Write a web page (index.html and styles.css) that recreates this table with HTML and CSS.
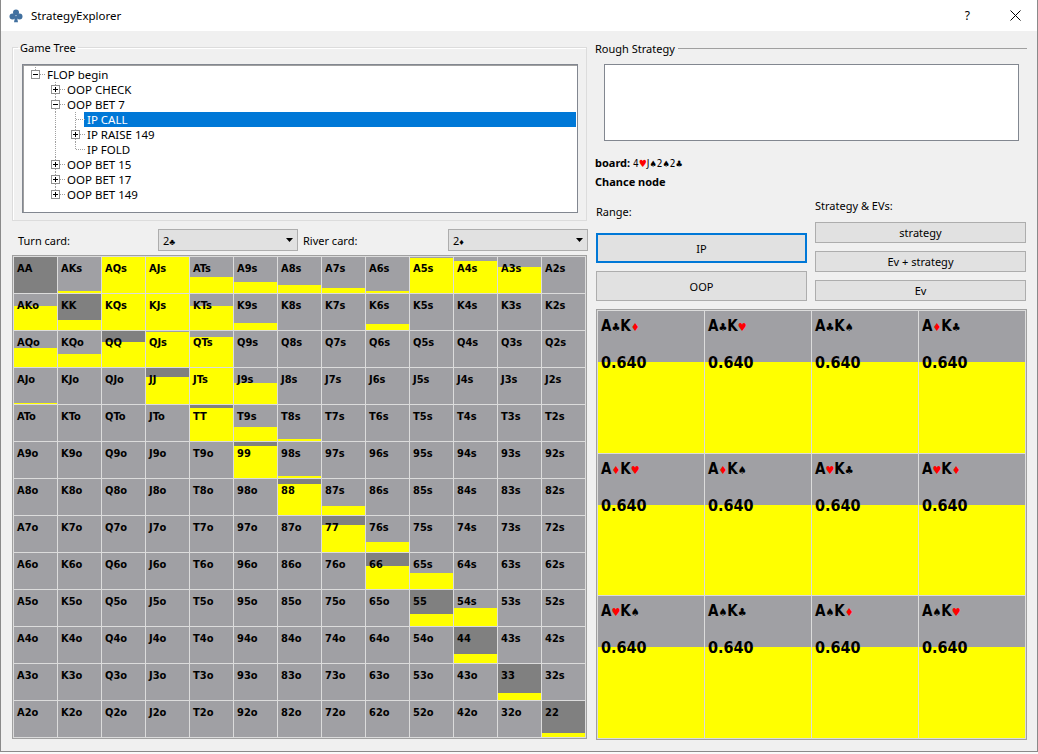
FILE: index.html
```html
<!DOCTYPE html>
<html>
<head>
<meta charset="utf-8">
<title>StrategyExplorer</title>
<link rel="stylesheet" href="styles.css">
</head>
<body>
<div class="window">
  <div class="titlebar">
    <svg class="app-icon" width="14" height="14" viewBox="0 0 14 14"><circle cx="7" cy="3.6" r="3"/><circle cx="3.5" cy="7.6" r="3"/><circle cx="10.5" cy="7.6" r="3"/><path d="M6.2 7h1.6l1.2 6.2H5z"/></svg>
    <span class="title">StrategyExplorer</span>
    <span class="help">?</span>
    <svg class="close" width="11" height="11" viewBox="0 0 11 11"><path d="M0.5 0.5l10 10M10.5 0.5l-10 10" stroke="#000" stroke-width="1"/></svg>
  </div>

  <div class="content">
    <div class="left">
      <fieldset class="group">
        <legend>Game Tree</legend>
        <div class="tree">
          <div class="row"><span class="br l"><svg class="exp" width="9" height="9"><rect x="0.5" y="0.5" width="8" height="8" fill="#fff" stroke="#919191"/><path d="M2 4.5h5" stroke="#000"/></svg></span><span class="lbl">FLOP begin</span></div>
          <div class="row"><span class="br"></span><span class="br t"><svg class="exp" width="9" height="9"><rect x="0.5" y="0.5" width="8" height="8" fill="#fff" stroke="#919191"/><path d="M2 4.5h5M4.5 2v5" stroke="#000"/></svg></span><span class="lbl">OOP CHECK</span></div>
          <div class="row"><span class="br"></span><span class="br t"><svg class="exp" width="9" height="9"><rect x="0.5" y="0.5" width="8" height="8" fill="#fff" stroke="#919191"/><path d="M2 4.5h5" stroke="#000"/></svg></span><span class="lbl">OOP BET 7</span></div>
          <div class="row sel"><span class="br"></span><span class="br v"></span><span class="br t"></span><span class="lbl">IP CALL</span></div>
          <div class="row"><span class="br"></span><span class="br v"></span><span class="br t"><svg class="exp" width="9" height="9"><rect x="0.5" y="0.5" width="8" height="8" fill="#fff" stroke="#919191"/><path d="M2 4.5h5M4.5 2v5" stroke="#000"/></svg></span><span class="lbl">IP RAISE 149</span></div>
          <div class="row"><span class="br"></span><span class="br v"></span><span class="br l"></span><span class="lbl">IP FOLD</span></div>
          <div class="row"><span class="br"></span><span class="br t"><svg class="exp" width="9" height="9"><rect x="0.5" y="0.5" width="8" height="8" fill="#fff" stroke="#919191"/><path d="M2 4.5h5M4.5 2v5" stroke="#000"/></svg></span><span class="lbl">OOP BET 15</span></div>
          <div class="row"><span class="br"></span><span class="br t"><svg class="exp" width="9" height="9"><rect x="0.5" y="0.5" width="8" height="8" fill="#fff" stroke="#919191"/><path d="M2 4.5h5M4.5 2v5" stroke="#000"/></svg></span><span class="lbl">OOP BET 17</span></div>
          <div class="row"><span class="br"></span><span class="br l"><svg class="exp" width="9" height="9"><rect x="0.5" y="0.5" width="8" height="8" fill="#fff" stroke="#919191"/><path d="M2 4.5h5M4.5 2v5" stroke="#000"/></svg></span><span class="lbl">OOP BET 149</span></div>
        </div>
      </fieldset>

      <div class="cards-row">
        <span class="lab first">Turn card:</span>
        <div class="combo"><span>2<span class="suit">♣</span></span><svg class="arrow" width="7" height="4" viewBox="0 0 7 4"><path d="M0 0h7L3.5 4z"/></svg></div>
        <span class="lab">River card:</span>
        <div class="combo"><span>2<span class="suit">♦</span></span><svg class="arrow" width="7" height="4" viewBox="0 0 7 4"><path d="M0 0h7L3.5 4z"/></svg></div>
      </div>

      <div class="range">
        <div class="c p">AA</div><div class="c" style="--y:5%">AKs</div><div class="c" style="--y:100%">AQs</div><div class="c" style="--y:100%">AJs</div><div class="c" style="--y:44%">ATs</div><div class="c" style="--y:30%">A9s</div><div class="c" style="--y:22%">A8s</div><div class="c" style="--y:13%">A7s</div><div class="c" style="--y:6%">A6s</div><div class="c" style="--y:96%">A5s</div><div class="c" style="--y:88%">A4s</div><div class="c" style="--y:73%">A3s</div><div class="c">A2s</div>
        <div class="c" style="--y:66%">AKo</div><div class="c p" style="--y:28%">KK</div><div class="c" style="--y:100%">KQs</div><div class="c" style="--y:100%">KJs</div><div class="c" style="--y:66%">KTs</div><div class="c" style="--y:19%">K9s</div><div class="c">K8s</div><div class="c">K7s</div><div class="c" style="--y:16%">K6s</div><div class="c">K5s</div><div class="c">K4s</div><div class="c">K3s</div><div class="c">K2s</div>
        <div class="c" style="--y:54%">AQo</div><div class="c" style="--y:35%">KQo</div><div class="c p" style="--y:69%">QQ</div><div class="c" style="--y:97%">QJs</div><div class="c" style="--y:83%">QTs</div><div class="c">Q9s</div><div class="c">Q8s</div><div class="c">Q7s</div><div class="c">Q6s</div><div class="c">Q5s</div><div class="c">Q4s</div><div class="c">Q3s</div><div class="c">Q2s</div>
        <div class="c" style="--y:3%">AJo</div><div class="c">KJo</div><div class="c">QJo</div><div class="c p" style="--y:76%">JJ</div><div class="c" style="--y:100%">JTs</div><div class="c" style="--y:59%">J9s</div><div class="c">J8s</div><div class="c">J7s</div><div class="c">J6s</div><div class="c">J5s</div><div class="c">J4s</div><div class="c">J3s</div><div class="c">J2s</div>
        <div class="c">ATo</div><div class="c">KTo</div><div class="c">QTo</div><div class="c">JTo</div><div class="c p" style="--y:91%">TT</div><div class="c" style="--y:40%">T9s</div><div class="c" style="--y:5%">T8s</div><div class="c">T7s</div><div class="c">T6s</div><div class="c">T5s</div><div class="c">T4s</div><div class="c">T3s</div><div class="c">T2s</div>
        <div class="c">A9o</div><div class="c">K9o</div><div class="c">Q9o</div><div class="c">J9o</div><div class="c">T9o</div><div class="c p" style="--y:89%">99</div><div class="c" style="--y:5%">98s</div><div class="c">97s</div><div class="c">96s</div><div class="c">95s</div><div class="c">94s</div><div class="c">93s</div><div class="c">92s</div>
        <div class="c">A8o</div><div class="c">K8o</div><div class="c">Q8o</div><div class="c">J8o</div><div class="c">T8o</div><div class="c">98o</div><div class="c p" style="--y:86%">88</div><div class="c" style="--y:25%">87s</div><div class="c">86s</div><div class="c">85s</div><div class="c">84s</div><div class="c">83s</div><div class="c">82s</div>
        <div class="c">A7o</div><div class="c">K7o</div><div class="c">Q7o</div><div class="c">J7o</div><div class="c">T7o</div><div class="c">97o</div><div class="c">87o</div><div class="c p" style="--y:74%">77</div><div class="c" style="--y:27%">76s</div><div class="c">75s</div><div class="c">74s</div><div class="c">73s</div><div class="c">72s</div>
        <div class="c">A6o</div><div class="c">K6o</div><div class="c">Q6o</div><div class="c">J6o</div><div class="c">T6o</div><div class="c">96o</div><div class="c">86o</div><div class="c">76o</div><div class="c p" style="--y:64%">66</div><div class="c" style="--y:45%">65s</div><div class="c">64s</div><div class="c">63s</div><div class="c">62s</div>
        <div class="c">A5o</div><div class="c">K5o</div><div class="c">Q5o</div><div class="c">J5o</div><div class="c">T5o</div><div class="c">95o</div><div class="c">85o</div><div class="c">75o</div><div class="c">65o</div><div class="c p" style="--y:34%">55</div><div class="c" style="--y:50%">54s</div><div class="c">53s</div><div class="c">52s</div>
        <div class="c">A4o</div><div class="c">K4o</div><div class="c">Q4o</div><div class="c">J4o</div><div class="c">T4o</div><div class="c">94o</div><div class="c">84o</div><div class="c">74o</div><div class="c">64o</div><div class="c">54o</div><div class="c p" style="--y:25%">44</div><div class="c">43s</div><div class="c">42s</div>
        <div class="c">A3o</div><div class="c">K3o</div><div class="c">Q3o</div><div class="c">J3o</div><div class="c">T3o</div><div class="c">93o</div><div class="c">83o</div><div class="c">73o</div><div class="c">63o</div><div class="c">53o</div><div class="c">43o</div><div class="c p" style="--y:20%">33</div><div class="c">32s</div>
        <div class="c">A2o</div><div class="c">K2o</div><div class="c">Q2o</div><div class="c">J2o</div><div class="c">T2o</div><div class="c">92o</div><div class="c">82o</div><div class="c">72o</div><div class="c">62o</div><div class="c">52o</div><div class="c">42o</div><div class="c">32o</div><div class="c p" style="--y:12%">22</div>
      </div>
    </div>

    <div class="right">
      <div class="flat-title"><span>Rough Strategy</span><span class="rule"></span></div>
      <div class="textarea"></div>
      <div class="board"><b>board:</b> <span class="bc">4<span class="red">♥</span>J<span class="s">♠</span>2<span class="s">♠</span>2<span class="s">♣</span></span></div>
      <div class="chance">Chance node</div>

      <div class="controls">
        <div class="ctl-col">
          <div class="ctl-label range-label">Range:</div>
          <div class="btn big focus">IP</div>
          <div class="btn big">OOP</div>
        </div>
        <div class="ctl-col">
          <div class="ctl-label">Strategy &amp; EVs:</div>
          <div class="btn">strategy</div>
          <div class="btn">Ev + strategy</div>
          <div class="btn">Ev</div>
        </div>
      </div>

      <div class="combos">
        <div class="cc"><div class="hand">A<span class="s">♣</span>K<span class="s red">♦</span></div><div class="val">0.640</div></div>
        <div class="cc"><div class="hand">A<span class="s">♣</span>K<span class="s red">♥</span></div><div class="val">0.640</div></div>
        <div class="cc"><div class="hand">A<span class="s">♣</span>K<span class="s">♠</span></div><div class="val">0.640</div></div>
        <div class="cc"><div class="hand">A<span class="s red">♦</span>K<span class="s">♣</span></div><div class="val">0.640</div></div>
        <div class="cc"><div class="hand">A<span class="s red">♦</span>K<span class="s red">♥</span></div><div class="val">0.640</div></div>
        <div class="cc"><div class="hand">A<span class="s red">♦</span>K<span class="s">♠</span></div><div class="val">0.640</div></div>
        <div class="cc"><div class="hand">A<span class="s red">♥</span>K<span class="s">♣</span></div><div class="val">0.640</div></div>
        <div class="cc"><div class="hand">A<span class="s red">♥</span>K<span class="s red">♦</span></div><div class="val">0.640</div></div>
        <div class="cc"><div class="hand">A<span class="s red">♥</span>K<span class="s">♠</span></div><div class="val">0.640</div></div>
        <div class="cc"><div class="hand">A<span class="s">♠</span>K<span class="s">♣</span></div><div class="val">0.640</div></div>
        <div class="cc"><div class="hand">A<span class="s">♠</span>K<span class="s red">♦</span></div><div class="val">0.640</div></div>
        <div class="cc"><div class="hand">A<span class="s">♠</span>K<span class="s red">♥</span></div><div class="val">0.640</div></div>
      </div>
    </div>
  </div>
</div>
</body>
</html>
```

FILE: styles.css
```css
html, body {
  margin: 0;
  padding: 0;
  background: #fafafa;
}

body {
  font-family: "Noto Sans", "Open Sans", sans-serif;
  font-size: 11px;
  color: #000;
}

.window {
  width: 1038px;
  height: 752px;
  box-sizing: border-box;
  border-left: 1px solid #8a8a8a;
  border-right: 1px solid #8a8a8a;
  border-bottom: 1px solid #8a8a8a;
  background: #f0f0f0;
  overflow: hidden;
}

/* ---------- title bar ---------- */
.titlebar {
  height: 31px;
  background: #ffffff;
  display: flex;
  align-items: center;
}

.app-icon {
  fill: #41709f;
  margin-left: 8px;
}

.title {
  margin-left: 8px;
  font-size: 11.5px;
}

.help {
  margin-left: auto;
  font-size: 12px;
  margin-right: 40px;
}

.close {
  margin-right: 16px;
}

/* ---------- content ---------- */
.content {
  display: flex;
  gap: 8px;
  padding: 9px 10px 0 11px;
}

.left {
  width: 575px;
  flex: none;
}

.right {
  width: 432px;
  flex: none;
}

/* ---------- group box ---------- */
.group {
  margin: 0;
  padding: 9px 8px 7px 9px;
  border: 1px solid #dcdcdc;
  box-shadow: inset 1px 1px 0 #ffffff;
}

.group legend {
  padding: 0 2px;
  margin-left: -4px;
}

.tree {
  height: 149px;
  box-sizing: border-box;
  background: #ffffff;
  border: 1px solid #828790;
  box-shadow: inset 1px 1px 0 #a0a0a0;
  padding: 2px 1px 0 2px;
}

.row {
  display: flex;
  height: 15px;
  line-height: 15px;
  font-size: 11.5px;
  white-space: nowrap;
}

.br {
  width: 20px;
  height: 15px;
  flex: none;
  position: relative;
  display: flex;
  align-items: center;
  justify-content: center;
}

.br .exp {
  position: relative;
  z-index: 1;
  margin-left: 1px;
}

.br.v::before,
.br.t::before,
.br.l::before {
  content: "";
  position: absolute;
  left: 10px;
  top: 0;
  bottom: 0;
  border-left: 1px dotted #a0a0a0;
}

.br.l::before {
  bottom: 8px;
}

.br.t::after,
.br.l::after {
  content: "";
  position: absolute;
  left: 11px;
  right: 0;
  top: 7px;
  border-top: 1px dotted #a0a0a0;
}

.lbl {
  padding: 0 3px 0 2px;
}

.row.sel .lbl {
  flex: 1;
  margin-left: -1px;
  padding-left: 3px;
  background: #0078d7;
  color: #ffffff;
}

/* ---------- turn / river ---------- */
.cards-row {
  display: grid;
  grid-template-columns: 146px 140px 150px 140px;
  align-items: center;
  margin-top: 8px;
  height: 22px;
}

.lab {
  padding-left: 5px;
}

.lab.first {
  padding-left: 6px;
}

.combo {
  height: 22px;
  box-sizing: border-box;
  background: #e1e1e1;
  border: 1px solid #adadad;
  display: flex;
  align-items: center;
  justify-content: space-between;
  padding: 0 4px 0 4px;
}

.suit {
  font-size: 9px;
}

.arrow {
  fill: #000;
}

/* ---------- range grid ---------- */
.range {
  margin-top: 4px;
  width: 575px;
  height: 484px;
  box-sizing: border-box;
  border: 1px solid #a0a0a0;
  background: #dcdcdc;
  padding: 1px;
  display: grid;
  grid-template-columns: repeat(13, 1fr);
  grid-template-rows: repeat(13, 1fr);
  gap: 1px;
}

.c {
  --y: 0%;
  --bg: #a0a0a4;
  background: linear-gradient(to top, #ffff00 var(--y), var(--bg) var(--y));
  font-family: "DejaVu Sans Condensed", "DejaVu Sans", sans-serif;
  font-stretch: condensed;
  font-weight: bold;
  font-size: 11px;
  line-height: 13px;
  padding: 5px 0 0 3px;
  overflow: hidden;
}

.c.p {
  --bg: #808080;
}

/* ---------- right side ---------- */
.flat-title {
  display: flex;
  align-items: center;
  height: 16px;
}

.flat-title .rule {
  flex: 1;
  margin-left: 3px;
  border-top: 1px solid #a0a0a0;
  margin-top: 1px;
}

.textarea {
  margin: 8px 0 0 9px;
  width: 415px;
  height: 77px;
  box-sizing: border-box;
  background: #ffffff;
  border: 1px solid #828790;
}

.board {
  margin-top: 14px;
  height: 16px;
  line-height: 16px;
}

.bc {
  font-family: "DejaVu Sans Condensed", "DejaVu Sans", sans-serif;
  font-size: 10px;
}

.bc .s {
  font-size: 9px;
}

.red {
  color: #ff0000;
}

.chance {
  margin-top: 3px;
  font-weight: bold;
  height: 16px;
  line-height: 16px;
}

.controls {
  margin-left: 1px;
  margin-top: 8px;
  display: grid;
  grid-template-columns: 211px 211px;
  column-gap: 8px;
  align-items: end;
}

.ctl-col {
  display: flex;
  flex-direction: column;
  gap: 8px;
}

.ctl-label {
  height: 16px;
  line-height: 16px;
}

.range-label {
  margin-bottom: 5px;
}

.btn {
  height: 21px;
  box-sizing: border-box;
  background: #e1e1e1;
  border: 1px solid #adadad;
  display: flex;
  align-items: center;
  justify-content: center;
}

.btn.big {
  height: 30px;
}

.btn.focus {
  border: 2px solid #0078d7;
}

/* ---------- combo grid ---------- */
.combos {
  margin: 8px 0 0 1px;
  width: 431px;
  height: 431px;
  box-sizing: border-box;
  border: 1px solid #a0a0a0;
  background: #dcdcdc;
  padding: 1px;
  display: grid;
  grid-template-columns: repeat(4, 1fr);
  grid-template-rows: repeat(3, 1fr);
  gap: 1px;
}

.cc {
  background: linear-gradient(to top, #ffff00 64%, #a0a0a4 64%);
  font-family: "DejaVu Sans Condensed", "DejaVu Sans", sans-serif;
  font-stretch: condensed;
  font-weight: bold;
  padding: 6px 0 0 3px;
}

.hand {
  font-size: 15px;
  line-height: 18px;
}

.hand .s {
  font-size: 11px;
}

.val {
  margin-top: 17px;
  font-size: 16px;
  line-height: 18px;
}
```
